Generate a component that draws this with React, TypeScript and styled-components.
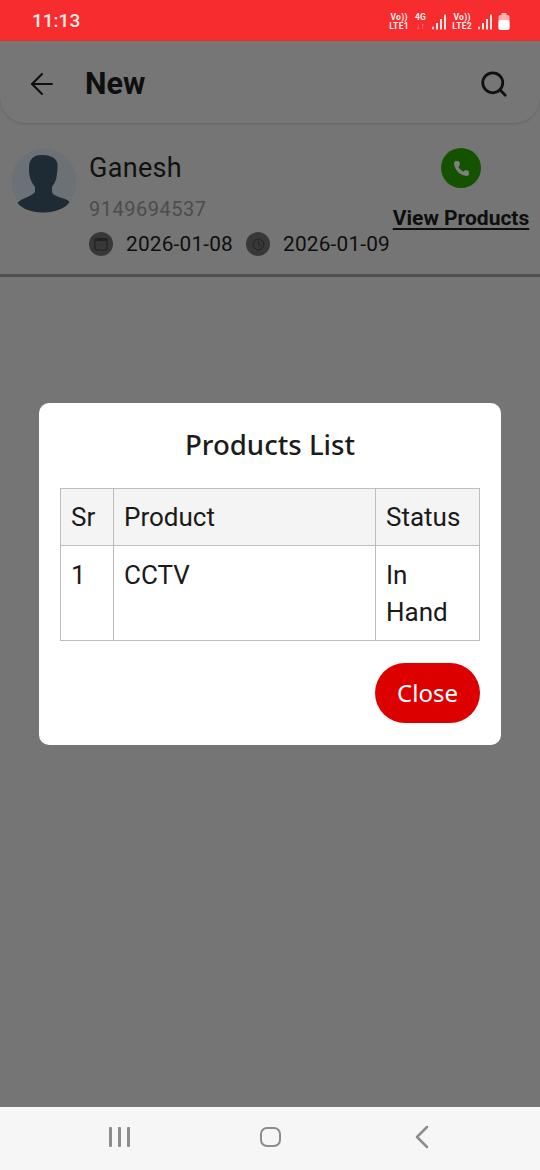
import React from 'react'
import styled, { createGlobalStyle } from 'styled-components'
import { ArrowLeft, Search, Phone, Clock, ChevronLeft } from 'lucide-react'

const GlobalStyle = createGlobalStyle`
  html, body {
    margin: 0;
    padding: 0;
    background: #757575;
  }
  * {
    box-sizing: border-box;
  }
`

function Signal() {
  return (
    <svg width="14" height="16" viewBox="0 0 14 16">
      <rect x="0" y="12.5" width="2" height="3" rx="1" fill="#ffd9d9" />
      <rect x="4" y="9" width="2" height="6.5" fill="#ffe6e6" />
      <rect x="8" y="5" width="2" height="10.5" fill="#ffe6e6" />
      <rect x="12" y="0.5" width="2" height="15" fill="#ffe6e6" />
    </svg>
  )
}

function Battery() {
  return (
    <svg width="12" height="17" viewBox="0 0 12 17">
      <rect x="3.5" y="0" width="5" height="3" fill="#ffb0b0" />
      <rect x="0.5" y="2" width="11" height="15" rx="2" fill="#ffb0b0" />
      <rect x="0.5" y="7" width="11" height="10" rx="2" fill="#ffffff" />
    </svg>
  )
}

function Avatar() {
  return (
    <svg width="66" height="66" viewBox="0 0 66 66">
      <circle cx="33" cy="33" r="32.5" fill="#6c7175" />
      <path
        d="M30 7 C 24 7 20 10 18.5 15 C 17.5 20 18 27 19.5 31 C 20.5 34 22.5 37 24 39 L 24 44 C 22 47 16 49 12 51 C 9 52.5 7 54 6.5 55 C 10 60 20 64.5 32 64.5 C 44 64.5 55 60 58.5 54 C 57 52 53 50.5 48 49 C 44 47.5 41 46 41 44 L 41 39 C 43 36 45 33 45.5 29 C 46.5 24 47 17 46 14 C 44.5 9.5 38 6.5 30 7 Z"
        fill="#1f2b34"
      />
    </svg>
  )
}

function CalendarGlyph() {
  return (
    <svg width="14" height="14" viewBox="0 0 14 14">
      <rect x="1" y="1.5" width="12" height="11.5" rx="1.5" fill="none" stroke="#222222" strokeWidth="1.2" />
      <rect x="1" y="1.5" width="12" height="2.5" fill="#222222" />
      <rect x="2.5" y="5" width="9" height="6.5" fill="#383838" />
    </svg>
  )
}

export default function App() {
  return (
    <>
      <GlobalStyle />
      <Screen>
        <StatusBar>
          <Time>11:13</Time>
          <StatusIcons>
            <Network>
              <span>Vo))</span>
              <span>LTE1</span>
            </Network>
            <Network>
              <span>4G</span>
              <Arrows>↓↑</Arrows>
            </Network>
            <Signal />
            <Network>
              <span>Vo))</span>
              <span>LTE2</span>
            </Network>
            <Signal />
            <Battery />
          </StatusIcons>
        </StatusBar>

        <Main>
          <AppBar>
            <BackButton>
              <ArrowLeft size={34} strokeWidth={1.5} />
            </BackButton>
            <PageTitle>New</PageTitle>
            <SearchButton>
              <Search size={30} strokeWidth={2.2} />
            </SearchButton>
          </AppBar>

          <LeadCard>
            <AvatarWrap>
              <Avatar />
            </AvatarWrap>
            <LeadInfo>
              <LeadName>Ganesh</LeadName>
              <LeadPhone>9149694537</LeadPhone>
              <DateRow>
                <DateBadge>
                  <CalendarGlyph />
                </DateBadge>
                <DateText>2026-01-08</DateText>
                <DateBadge>
                  <Clock size={13} strokeWidth={1.8} color="#222222" />
                </DateBadge>
                <DateText>2026-01-09</DateText>
              </DateRow>
            </LeadInfo>
            <LeadActions>
              <CallButton>
                <Phone size={17} fill="#808080" color="#808080" strokeWidth={1} />
              </CallButton>
              <ProductsLink>View Products</ProductsLink>
            </LeadActions>
          </LeadCard>

          <Overlay>
            <Modal>
              <ModalTitle>Products List</ModalTitle>
              <ProductsTable>
                <colgroup>
                  <col width="53" />
                  <col width="262" />
                  <col width="104" />
                </colgroup>
                <thead>
                  <tr>
                    <HeadCell>Sr</HeadCell>
                    <HeadCell>Product</HeadCell>
                    <HeadCell>Status</HeadCell>
                  </tr>
                </thead>
                <tbody>
                  <tr>
                    <BodyCell>1</BodyCell>
                    <BodyCell>CCTV</BodyCell>
                    <BodyCell>In Hand</BodyCell>
                  </tr>
                </tbody>
              </ProductsTable>
              <ModalFooter>
                <CloseButton>Close</CloseButton>
              </ModalFooter>
            </Modal>
          </Overlay>
        </Main>

        <NavBar>
          <RecentsIcon>
            <i />
            <i />
            <i />
          </RecentsIcon>
          <HomeIcon />
          <ChevronLeft size={40} strokeWidth={1.5} color="#8c8c8c" />
        </NavBar>
      </Screen>
    </>
  )
}

const Screen = styled.div`
  width: 540px;
  height: 1170px;
  display: flex;
  flex-direction: column;
  overflow: hidden;
  background: #757575;
  font-family: Roboto, sans-serif;
`

const StatusBar = styled.div`
  height: 41px;
  flex: none;
  display: flex;
  align-items: center;
  justify-content: space-between;
  padding: 0 30px 0 32px;
  background: #f62c2f;
  color: #ffeeee;
`

const Time = styled.div`
  font-size: 19px;
  font-weight: 500;
`

const StatusIcons = styled.div`
  display: flex;
  align-items: center;
  gap: 6px;
  padding-top: 2px;
`

const Network = styled.div`
  display: flex;
  flex-direction: column;
  align-items: center;
  font-size: 8.5px;
  font-weight: 700;
  line-height: 8.5px;
  letter-spacing: 0.3px;
`

const Arrows = styled.span`
  color: #ff9a9a;
`

const Main = styled.div`
  flex: 1;
  position: relative;
  display: flex;
  flex-direction: column;
`

const AppBar = styled.div`
  height: 82px;
  flex: none;
  display: flex;
  align-items: center;
  padding: 3px 31px 0 25px;
  background: #767676;
  border-radius: 0 0 26px 26px;
  box-shadow: 0 1px 3px rgba(0, 0, 0, 0.14);
  color: #0f0f0f;
`

const BackButton = styled.div`
  width: 34px;
  height: 34px;
  display: flex;
  align-items: center;
`

const PageTitle = styled.div`
  margin-left: 26px;
  font-size: 30.5px;
  font-weight: 700;
  color: #0e0e0e;
`

const SearchButton = styled.div`
  margin-left: auto;
  display: flex;
`

const LeadCard = styled.div`
  height: 154px;
  flex: none;
  display: flex;
  padding: 25px 11px 0 11px;
  border-bottom: 3px solid #505050;
`

const AvatarWrap = styled.div`
  width: 66px;
  height: 66px;
  flex: none;
`

const LeadInfo = styled.div`
  margin-left: 12px;
  flex: none;
  width: 304px;
`

const LeadName = styled.div`
  font-size: 27px;
  line-height: 40px;
  letter-spacing: 0.3px;
  color: #111111;
`

const LeadPhone = styled.div`
  margin-top: 7px;
  font-size: 20px;
  line-height: 28px;
  letter-spacing: 0.5px;
  color: #4c4c4c;
`

const DateRow = styled.div`
  margin-top: 8px;
  display: flex;
  align-items: center;
  height: 26px;
`

const DateBadge = styled.div`
  width: 24px;
  height: 24px;
  flex: none;
  display: flex;
  align-items: center;
  justify-content: center;
  border-radius: 50%;
  background: #383838;
`

const DateText = styled.div`
  margin: 0 13px;
  font-size: 20.8px;
  letter-spacing: 0.2px;
  color: #0e0e0e;
  white-space: nowrap;
`

const LeadActions = styled.div`
  width: 136px;
  flex: none;
  display: flex;
  flex-direction: column;
  align-items: center;
`

const CallButton = styled.div`
  width: 40px;
  height: 40px;
  display: flex;
  align-items: center;
  justify-content: center;
  border-radius: 50%;
  background: #145200;
`

const ProductsLink = styled.div`
  margin-top: 14px;
  font-size: 21px;
  font-weight: 700;
  line-height: 32px;
  color: #0e0e0e;
  white-space: nowrap;
  text-decoration: underline;
  text-underline-offset: 3px;
`

const Overlay = styled.div`
  position: absolute;
  inset: 0;
  display: flex;
  align-items: center;
  justify-content: center;
`

const Modal = styled.div`
  width: 462px;
  height: 342px;
  padding: 20px 21px 0;
  border-radius: 10px;
  background: #ffffff;
`

const ModalTitle = styled.div`
  height: 65px;
  text-align: center;
  font-family: 'Noto Sans', sans-serif;
  font-size: 27.6px;
  font-weight: 500;
  line-height: 42px;
  color: #1c1c1c;
`

const ProductsTable = styled.table`
  width: 419px;
  table-layout: fixed;
  border-collapse: collapse;
  font-size: 26px;
  color: #1a1a1a;
`

const HeadCell = styled.th`
  height: 57px;
  padding: 0 10px;
  border: 1px solid #bdbdbd;
  background: #f4f4f4;
  font-weight: 400;
  text-align: left;
`

const BodyCell = styled.td`
  height: 95px;
  padding: 11px 10px 0;
  border: 1px solid #bdbdbd;
  line-height: 37px;
  vertical-align: top;
`

const ModalFooter = styled.div`
  margin-top: 22px;
  display: flex;
  justify-content: flex-end;
`

const CloseButton = styled.div`
  width: 105px;
  height: 60px;
  display: flex;
  align-items: center;
  justify-content: center;
  border-radius: 30px;
  background: #dd0000;
  color: #ffffff;
  font-family: 'Noto Sans', sans-serif;
  font-size: 24px;
  padding-bottom: 2px;
`

const NavBar = styled.div`
  height: 63px;
  flex: none;
  display: flex;
  align-items: center;
  padding: 0 0 4px 109px;
  background: #f6f6f6;
`

const RecentsIcon = styled.div`
  width: 21px;
  height: 20px;
  display: flex;
  justify-content: space-between;

  i {
    width: 3px;
    height: 20px;
    border-radius: 1px;
    background: #8c8c8c;
  }
`

const HomeIcon = styled.div`
  width: 21px;
  height: 20px;
  margin: 0 121px 0 130px;
  border: 2.5px solid #8c8c8c;
  border-radius: 7px;
`
